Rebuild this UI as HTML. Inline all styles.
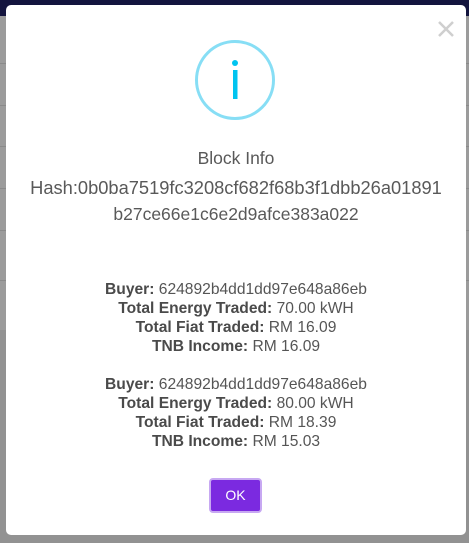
<!DOCTYPE html>
<html><head><style>
html,body{margin:0;width:469px;height:543px;overflow:hidden;font-family:"Liberation Sans",sans-serif;}
body{background:#9b9b9b;position:relative}
.nav{position:absolute;left:0;top:0;width:469px;height:16px;background:#13143e}
.low{position:absolute;left:0;top:330px;width:469px;height:213px;background:#929292}
.row{position:absolute;left:0;width:469px;height:1px;background:#8a8a8a}
.modal{position:absolute;left:6px;top:5px;width:460px;height:530px;background:#fff;border-radius:5px}
.t{position:absolute;left:0;width:460px;text-align:center;color:#595959;white-space:nowrap}
.info{font-size:15.6px;line-height:19px;color:#555}
.info b{color:#4a4a4a}
.btn{position:absolute;left:203px;top:473px;width:49px;height:31px;background:#7b2ae0;border:2px solid #c7a8f2;border-radius:4px;color:#fff;font-size:14px;text-align:center;line-height:31px}
</style></head><body>
<div class="nav"></div><div class="low"></div>
<div class="row" style="top:63px"></div><div class="row" style="top:105px"></div><div class="row" style="top:146px"></div><div class="row" style="top:188px"></div><div class="row" style="top:230px"></div><div class="row" style="top:280px"></div>
<div class="modal">
<svg style="position:absolute;left:430px;top:14px" width="20" height="20"><path d="M3 3L17 17M17 3L3 17" stroke="#cfcfcf" stroke-width="2.5"/></svg>
<svg style="position:absolute;left:189px;top:35px" width="82" height="82"><circle cx="40" cy="40" r="38.5" fill="none" stroke="#87def5" stroke-width="3"/><circle cx="40" cy="23" r="3" fill="#00c4f0"/><rect x="38" y="30" width="4.5" height="29" fill="#00c4f0"/></svg>
<div class="t" style="top:143px;font-size:17.5px">Block Info</div>
<div class="t" style="top:172px;font-size:18.3px">Hash:0b0ba7519fc3208cf682f68b3f1dbb26a01891</div>
<div class="t" style="top:199px;font-size:17.5px">b27ce66e1c6e2d9afce383a022</div>
<div class="t info" style="top:275px"><b>Buyer:</b> 624892b4dd1dd97e648a86eb<br><b>Total Energy Traded:</b> 70.00 kWH<br><b>Total Fiat Traded:</b> RM 16.09<br><b>TNB Income:</b> RM 16.09</div>
<div class="t info" style="top:370px"><b>Buyer:</b> 624892b4dd1dd97e648a86eb<br><b>Total Energy Traded:</b> 80.00 kWH<br><b>Total Fiat Traded:</b> RM 18.39<br><b>TNB Income:</b> RM 15.03</div>
<div class="btn">OK</div>
</div>
</body></html>
